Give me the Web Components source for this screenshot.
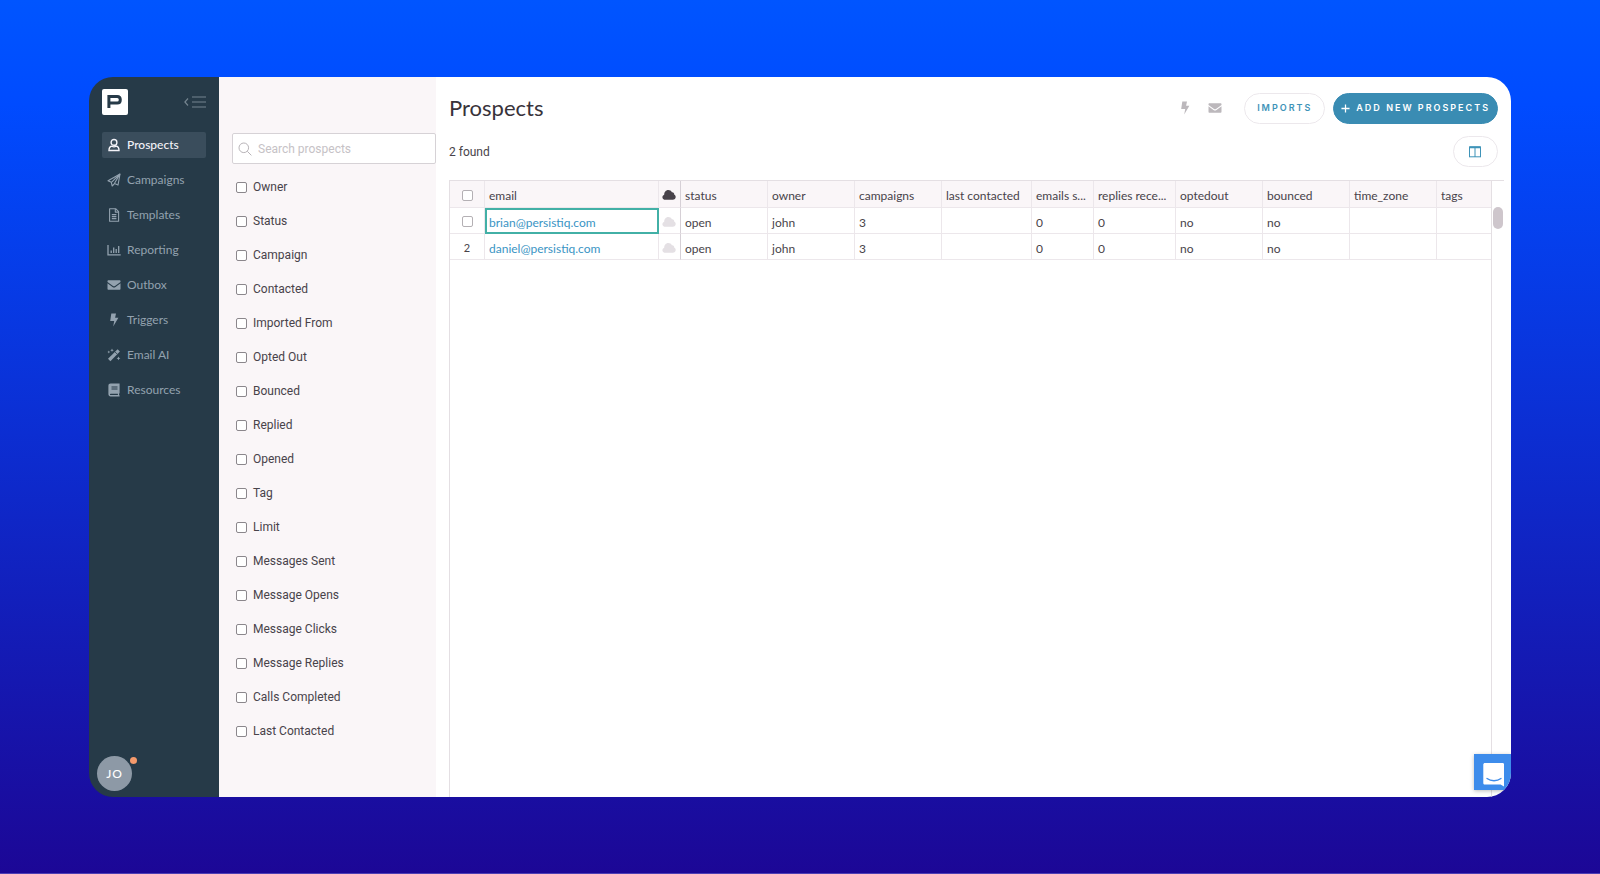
<!DOCTYPE html>
<html lang="en">
<head>
<meta charset="utf-8">
<title>Prospects</title>
<style>
  html, body { margin: 0; }
  body {
    font: 12px/16px Lato, sans-serif;
    color: #48434a;
  }
</style>
</head>
<body>
<prospects-app></prospects-app>

<script>
/* Shared line and solid icons, keyed by name. */
const ICONS = {
  user: ['0 0 14 14', '<g fill="none" stroke="currentColor" stroke-width="1.4"><circle cx="7" cy="4.4" r="2.9"/><path d="M4.7 8C2.800 8.500 2 9.800 2 12.500h10c0-2.700-.8-4-2.700-4.500M4.700 8c1.400 1.100 3.200 1.100 4.600 0"/></g>'],
  plane: ['0 0 14 14', '<g fill="none" stroke="currentColor" stroke-width="1.100" stroke-linejoin="round"><path d="M13 1 1 7.800l3.300 1.500L5.200 13l2.300-2.400 3.500 1.500z"/><path d="M13 1 4.400 9.300M13 1 7.400 10.500"/></g>'],
  file: ['0 0 14 14', '<g fill="none" stroke="currentColor" stroke-width="1.100" stroke-linejoin="round"><path d="M2.600.7h6l3 3v9.600h-9z"/><path d="M8.300.9v3.200h3.200M4.800 6.600h4.600M4.800 8.600h4.600M4.800 10.600h4.600"/></g>'],
  chart: ['0 0 14 14', '<g fill="none" stroke="currentColor" stroke-width="1.300"><path d="M1 2v9.900h12.700M4.200 10V7.400M6.700 10V4.400M9.200 10V6M11.700 10V3"/></g>'],
  mail: ['0 0 14 14', '<path fill="currentColor" d="M.5 3.200c0-.6.400-1 1-1h11c.6 0 1 .4 1 1v.7L8 7.900c-.7.500-1.300.5-2 0L.5 3.900zM.5 5.300l5 3.600c1 .7 2 .7 3 0l5-3.600v5.500c0 .6-.4 1-1 1h-11c-.6 0-1-.4-1-1z"/>'],
  bolt: ['0 0 14 14', '<path fill="currentColor" d="M4.300.6h4.700L8.100 4.700h3.300L6.200 13.400l1-5.300H3.200z"/>'],
  wand: ['0 0 14 14', '<path fill="currentColor" d="M10.600 1.200 12.900 3.500 3.400 13.200 1 10.800z"/><path d="m8.100 4 2 2" stroke="#263a48" stroke-width=".8"/><path fill="currentColor" d="m5 .5.5 1.300 1.300.5-1.300.5L5 4.100l-.5-1.300-1.300-.5 1.300-.5zM1.800 2.600l.4 1 1 .4-1 .4-.4 1-.4-1-1-.4 1-.4zM11.500 8.400l.6 1.300 1.300.6-1.300.6-.6 1.300-.6-1.300-1.300-.6 1.300-.6z"/>'],
  book: ['0 0 14 14', '<path fill="currentColor" fill-rule="evenodd" d="M3.600.6h9v9.500l-.5.600v1.400l.5.400v.9h-9C2.300 13.400 1.400 12.500 1.400 11.300V2.800C1.400 1.500 2.300.6 3.600.6zm.9 3v1h6v-1zm0 2v1h6v-1zM3.700 10.700c-1 0-1 1.400 0 1.400h7.200v-1.400z"/>'],
  collapse: ['0 0 22 12', '<g fill="none" stroke="currentColor" stroke-width="1.200"><path d="M4 2.500.9 6 4 9.500M8 1h14M8 6h14M8 11h14"/></g>'],
  search: ['0 0 14 14', '<g fill="none" stroke="currentColor" stroke-width="1"><circle cx="5.800" cy="5.800" r="4.800"/><path d="M9.300 9.300 13.400 13.400"/></g>'],
  cloud: ['0 0 14 12', '<path fill="currentColor" d="M3.500 10.800C1.600 10.800.4 9.700.4 8.200c0-1.200.7-2.100 1.800-2.500C2.100 3.200 3.900 1 6.300 1c1.700 0 2.900.8 3.600 2.200 1.500-.2 2.500.8 2.300 2.300.9.500 1.500 1.400 1.500 2.500 0 1.600-1.200 2.800-2.900 2.800z"/>'],
  columns: ['0 0 12 12', '<g fill="none" stroke="currentColor"><rect x=".5" y="1" width="11" height="9.800"/><path stroke-width="2" d="M.5 1.200h11"/><path d="M6 1v10"/></g>'],
  plus: ['0 0 10 10', '<path d="M5 .5v9M.5 5h9" fill="none" stroke="currentColor" stroke-width="1.400"/>'],
  logo: ['0 0 26 26', '<path fill="none" stroke="#263a48" stroke-width="3" d="M6.900 19V7.500h8.300c2.100 0 3.100 1 3.100 3.200s-1 3.400-3.100 3.400H7"/>'],
  chat: ['0 0 24 26', '<path fill="#fff" d="M3 1h17.500c1 0 1.500.5 1.500 1.500V24.500L18.600 22.600H3c-1.100 0-1.700-.6-1.700-1.700V2.600C1.300 1.600 2 1 3 1z"/><path d="M5 16.500c4 3 10 3 14 0" fill="none" stroke="#3d8ceb" stroke-width="1.300" stroke-linecap="round"/>']
};

/* Renders a template into an open shadow root. */
class Base extends HTMLElement {
  connectedCallback() {
    if (this.shadowRoot) return;
    const t = document.createElement('template');
    t.innerHTML = '<style>*{box-sizing:border-box}</style>' + this.render();
    this.attachShadow({ mode: 'open' }).append(t.content.cloneNode(true));
  }
}

customElements.define('ui-icon', class extends Base {
  render() {
    const [box, body] = ICONS[this.getAttribute('name')];
    return `<style>:host{display:block;flex:none;width:14px;height:14px}svg{display:block;width:100%;height:100%}</style>
      <svg viewBox="${box}" aria-hidden="true">${body}</svg>`;
  }
});

customElements.define('nav-item', class extends Base {
  render() {
    return `<style>
      :host{display:block}
      a{display:flex;align-items:center;gap:6px;height:26px;padding:0 5px;border-radius:2px;color:#93a2af;text-decoration:none}
      :host([active]) a{background:#3a4d5c;color:#f2f2f8;font-weight:500}
    </style>
    <a href="#"><ui-icon name="${this.getAttribute('icon')}"></ui-icon><span><slot></slot></span></a>`;
  }
});

customElements.define('side-bar', class extends Base {
  render() {
    return `<style>
      :host{display:flex;flex-direction:column;background:#263a48;padding:12px 13px 6px}
      header{display:flex;justify-content:space-between;align-items:center;height:26px;margin-bottom:17px}
      .logo{width:26px;height:26px;background:#fff;border-radius:2px}
      .logo ui-icon{width:26px;height:26px}
      button{border:0;padding:0;background:none;color:#74848f}
      button ui-icon{width:22px;height:12px}
      nav{display:grid;gap:9px}
      .me{position:relative;align-self:flex-start;margin:auto 0 0 -5px;width:35px;height:35px;border-radius:50%;background:#8d99a6;color:#fff;font:500 12px/35px Lato,sans-serif;letter-spacing:1px;text-align:center}
      .me i{position:absolute;right:-5px;top:1px;width:7px;height:7px;border-radius:50%;background:#f59a6c}
    </style>
    <header><a class="logo" href="#" aria-label="Home"><ui-icon name="logo"></ui-icon></a>
      <button aria-label="Collapse menu"><ui-icon name="collapse"></ui-icon></button></header>
    <nav>
      <nav-item icon="user" active>Prospects</nav-item>
      <nav-item icon="plane">Campaigns</nav-item>
      <nav-item icon="file">Templates</nav-item>
      <nav-item icon="chart">Reporting</nav-item>
      <nav-item icon="mail">Outbox</nav-item>
      <nav-item icon="bolt">Triggers</nav-item>
      <nav-item icon="wand">Email AI</nav-item>
      <nav-item icon="book">Resources</nav-item>
    </nav>
    <button class="me" aria-label="Account JO">JO<i></i></button>`;
  }
});

/* Outlined tick box used in the filter list and the table. */
const CHECK = `input[type=checkbox]{appearance:none;flex:none;width:11px;height:11px;margin:0;border:1px solid #8b878c;border-radius:2px;background:#fff}`;

customElements.define('filter-option', class extends Base {
  render() {
    return `<style>
      :host{display:block}
      label{display:flex;align-items:center;gap:6px;height:34px}
      ${CHECK}
    </style>
    <label><input type="checkbox"><span><slot></slot></span></label>`;
  }
});

customElements.define('filter-panel', class extends Base {
  render() {
    const names = ['Owner', 'Status', 'Campaign', 'Contacted', 'Imported From', 'Opted Out', 'Bounced', 'Replied', 'Opened', 'Tag', 'Limit', 'Messages Sent', 'Message Opens', 'Message Clicks', 'Message Replies', 'Calls Completed', 'Last Contacted'];
    return `<style>
      :host{display:block;background:#faf6f8;padding:56px 0 0 13px;font-family:Roboto,sans-serif}
      .search{display:flex;align-items:center;gap:6px;height:31px;padding-left:5px;border:1px solid #d6d2d6;border-radius:2px;background:#fff;color:#b8b4b8}
      input{flex:1;min-width:0;border:0;padding:0;background:none;outline:0;font:12px/16px Roboto,sans-serif}
      input::placeholder{color:#c6c2c6;opacity:1}
      .list{padding:6px 0 0 4px}
    </style>
    <label class="search"><ui-icon name="search"></ui-icon><input type="search" placeholder="Search prospects" aria-label="Search prospects"></label>
    <div class="list">${names.map(n => `<filter-option>${n}</filter-option>`).join('')}</div>`;
  }
});

customElements.define('pill-button', class extends Base {
  render() {
    return `<style>
      :host{display:block}
      button{display:flex;align-items:center;justify-content:center;gap:6px;height:31px;padding:0 12px;border:1px solid #ece8ec;border-radius:16px;background:#fff;color:#3e93b8;font:600 9px/16px Inter,sans-serif;letter-spacing:2px;white-space:nowrap}
      :host([primary]) button{padding:0 7px;background:#3a8cb3;border-color:#3a8cb3;color:#fff}
      :host([compact]) button{width:45px;padding:0 2px 0 0}
    </style>
    <button aria-label="${this.getAttribute('label')}"><slot></slot></button>`;
  }
});

customElements.define('prospect-table', class extends Base {
  render() {
    const widths = [35, 174, 22, 87, 87, 87, 90, 62, 82, 87, 87, 87];
    const heads = ['status', 'owner', 'campaigns', 'last contacted', 'emails s...', 'replies rece...', 'optedout', 'bounced', 'time_zone', 'tags'];
    const rows = [['brian@persistiq.com', true], ['daniel@persistiq.com', false]];
    const values = ['open', 'john', '3', '', '0', '0', 'no', 'no', '', ''];
    const cloud = '<ui-icon name="cloud"></ui-icon>';
    return `<style>
      :host{display:grid;grid-template-columns:minmax(0,1fr) 12px;border-top:1px solid #e4dfe3}
      .grid{border:solid #e4dfe3;border-width:0 1px}
      table{width:100%;table-layout:fixed;border-collapse:separate;border-spacing:0}
      th,td{height:26px;padding:4px 3px 0 4px;border:solid #ece7eb;border-width:0 1px 1px 0;font-weight:400;text-align:left;white-space:nowrap}
      th{height:27px;background:#faf6f8}
      th:last-child,td:last-child{border-right:0}
      td:first-child,th:first-child{padding:2px 0 0;text-align:center;font-size:11px}
      td:nth-child(3),th:nth-child(3){padding:2px 3px 0;color:#e4e0e4;border-right-color:#d6d0d6}
      th:nth-child(3){color:#48434a}
      ui-icon{height:12px}
      td.selected{border:2px solid #42b0a6;padding:3px 3px 0 2px}
      a{color:#3a94c4;text-decoration:none}
      ${CHECK}
      input[type=checkbox]{display:block;margin:0 auto;border-color:#b4b0b4}
      .thumb{width:10px;height:22px;margin:26px 0 0 1px;border-radius:5px;background:#cec6cc}
    </style>
    <div class="grid"><table>
      <colgroup>${widths.map(w => `<col style="width:${w}px">`).join('')}<col></colgroup>
      <thead><tr><th><input type="checkbox" aria-label="Select all"></th><th>email</th><th aria-label="CRM sync">${cloud}</th>${heads.map(h => `<th>${h}</th>`).join('')}</tr></thead>
      <tbody>${rows.map(([mail, current], i) => `<tr>
        <td>${current ? `<input type="checkbox" aria-label="Select ${mail}">` : i + 1}</td>
        <td${current ? ' class="selected"' : ''}><a href="#">${mail}</a></td>
        <td>${cloud}</td>${values.map(v => `<td>${v}</td>`).join('')}</tr>`).join('')}</tbody>
    </table></div>
    <div class="thumb"></div>`;
  }
});

customElements.define('prospects-page', class extends Base {
  render() {
    return `<style>
      :host{display:flex;flex-direction:column;min-width:0;background:#fff;padding:15px 0 0 13px}
      .top,.sub{display:flex;align-items:center;justify-content:space-between;padding-right:13px}
      .top{height:32px}
      .sub{height:31px;margin:12px 0 13px}
      h1{margin:0;font-size:22px;line-height:28px;font-weight:400;color:#38333a}
      .actions{display:flex;align-items:center;gap:8px}
      .tools{display:flex;gap:16px;margin-right:14px}
      .tool{border:0;padding:0;background:none;color:#bcb8bc}
      .found{font-family:Roboto,sans-serif}
      pill-button ui-icon{width:12px;height:12px}
      pill-button ui-icon[name=plus]{width:9px;height:9px}
      prospect-table{flex:1;margin-right:7px}
    </style>
    <div class="top"><h1>Prospects</h1>
      <div class="actions">
        <div class="tools"><button class="tool" aria-label="Triggers"><ui-icon name="bolt"></ui-icon></button><button class="tool" aria-label="Email"><ui-icon name="mail"></ui-icon></button></div>
        <pill-button label="Imports">IMPORTS</pill-button>
        <pill-button primary label="Add new prospects"><ui-icon name="plus"></ui-icon>ADD NEW PROSPECTS</pill-button>
      </div></div>
    <div class="sub"><span class="found">2 found</span>
      <pill-button compact label="Choose columns"><ui-icon name="columns"></ui-icon></pill-button></div>
    <prospect-table></prospect-table>`;
  }
});

customElements.define('prospects-app', class extends Base {
  render() {
    return `<style>
      :host{display:flex;min-height:100vh;box-sizing:border-box;padding:77px 89px 76px;background:linear-gradient(#0055ff,#004bff 12%,#1c0796);border-bottom:1px solid #4c3eb4}
      .window{position:relative;flex:1;min-width:0;display:grid;grid-template-columns:130px 217px minmax(0,1fr);border-radius:24px;overflow:hidden}
      .chat{position:absolute;right:0;bottom:7px;width:37px;height:36px;padding:5px 0 0 8px;border:0;background:#3d8ceb;box-shadow:0 1px 4px #0004}
      .chat ui-icon{width:24px;height:26px}
    </style>
    <div class="window">
      <side-bar></side-bar>
      <filter-panel></filter-panel>
      <prospects-page></prospects-page>
      <button class="chat" aria-label="Open chat"><ui-icon name="chat"></ui-icon></button>
    </div>`;
  }
});
</script>
</body>
</html>
